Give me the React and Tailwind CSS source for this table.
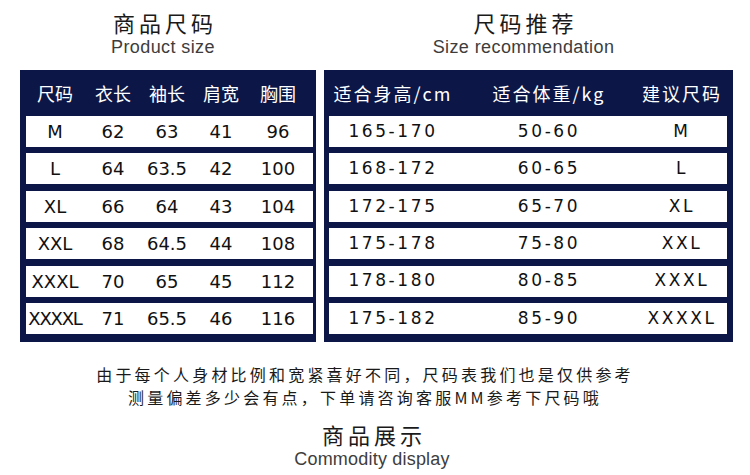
const sizeRows = [
  ["M", "62", "63", "41", "96"],
  ["L", "64", "63.5", "42", "100"],
  ["XL", "66", "64", "43", "104"],
  ["XXL", "68", "64.5", "44", "108"],
  ["XXXL", "70", "65", "45", "112"],
  ["XXXXL", "71", "65.5", "46", "116"],
]

const recRows = [
  ["165-170", "50-60", "M"],
  ["168-172", "60-65", "L"],
  ["172-175", "65-70", "XL"],
  ["175-178", "75-80", "XXL"],
  ["178-180", "80-85", "XXXL"],
  ["175-182", "85-90", "XXXXL"],
]

const cjk = { fontFamily: '"Noto Sans CJK SC", "Noto Sans", sans-serif' }
const latin = { fontFamily: '"Liberation Sans", Arial, sans-serif' }
const nums = { fontFamily: '"DejaVu Sans", Verdana, "Noto Sans CJK SC", sans-serif' }

function Title({ cn, en }) {
  return (
    <div className="flex flex-col items-center pr-[10px]">
      <div className="text-[22px] leading-[22px] tracking-[4px] text-[#1a1a1a] pl-[4px]" style={cjk}>
        {cn}
      </div>
      <div className="text-[18px] leading-[18px] tracking-[0.4px] text-[#3d3d3d] mt-[5px]" style={latin}>
        {en}
      </div>
    </div>
  )
}

export default function App() {
  return (
    <div className="w-[750px] h-[475px] bg-white overflow-hidden">
      <div className="flex gap-[8px] pl-[20px] pt-[11px]">
        {/* left: product size */}
        <div className="w-[296px] flex flex-col">
          <Title cn="商品尺码" en="Product size" />
          <div className="mt-[14px] bg-[#0c1747] pl-[6px] pr-[3px] pb-[8px]">
            <div className="h-[46px] grid grid-cols-[58px_58px_50px_58px_56px] items-center text-white text-[18px]" style={cjk}>
              {["尺码", "衣长", "袖长", "肩宽", "胸围"].map((h) => (
                <div key={h} className="text-center">{h}</div>
              ))}
            </div>
            <div className="flex flex-col gap-[6.4px]">
              {sizeRows.map((r) => (
                <div key={r[0]} className="h-[31px] bg-white grid grid-cols-[58px_58px_50px_58px_56px] items-center text-[18px] text-[#111]" style={nums}>
                  {r.map((c, i) => (
                    <div key={i} className={i === 0 && c.length > 4 ? "text-center tracking-[-1.2px]" : "text-center"}>{c}</div>
                  ))}
                </div>
              ))}
            </div>
          </div>
        </div>

        {/* right: size recommendation */}
        <div className="w-[409px] flex flex-col">
          <Title cn="尺码推荐" en="Size recommendation" />
          <div className="mt-[14px] bg-[#0c1747] pl-[5px] pr-[6px] pb-[8px]">
            <div className="h-[46px] grid grid-cols-[128px_184px_82px] items-center text-white text-[18px] tracking-[2px]" style={cjk}>
              <div className="text-center">适合身高/cm</div>
              <div className="text-center">适合体重/kg</div>
              <div className="text-center">建议尺码</div>
            </div>
            <div className="flex flex-col gap-[6.4px]">
              {recRows.map((r) => (
                <div key={r[0] + r[2]} className="h-[31px] bg-white grid grid-cols-[128px_184px_82px] items-center text-[17px] tracking-[2.6px] text-[#111]" style={nums}>
                  {r.map((c, i) => (
                    <div key={i} className="text-center">{c}</div>
                  ))}
                </div>
              ))}
            </div>
          </div>
        </div>
      </div>

      {/* note */}
      <div className="mt-[21px] pr-[20px] text-center text-[16px] leading-[23px] tracking-[3.2px] text-[#1a1a1a]" style={cjk}>
        <div>由于每个人身材比例和宽紧喜好不同，尺码表我们也是仅供参考</div>
        <div>测量偏差多少会有点，下单请咨询客服MM参考下尺码哦</div>
      </div>

      <div className="mt-[14px] flex flex-col items-center pr-[6px]">
        <div className="text-[22px] leading-[22px] tracking-[4px] text-[#1a1a1a] pl-[4px]" style={cjk}>商品展示</div>
        <div className="text-[18px] leading-[18px] tracking-[0.2px] text-[#3d3d3d] mt-[5px]" style={latin}>Commodity display</div>
      </div>
    </div>
  )
}
